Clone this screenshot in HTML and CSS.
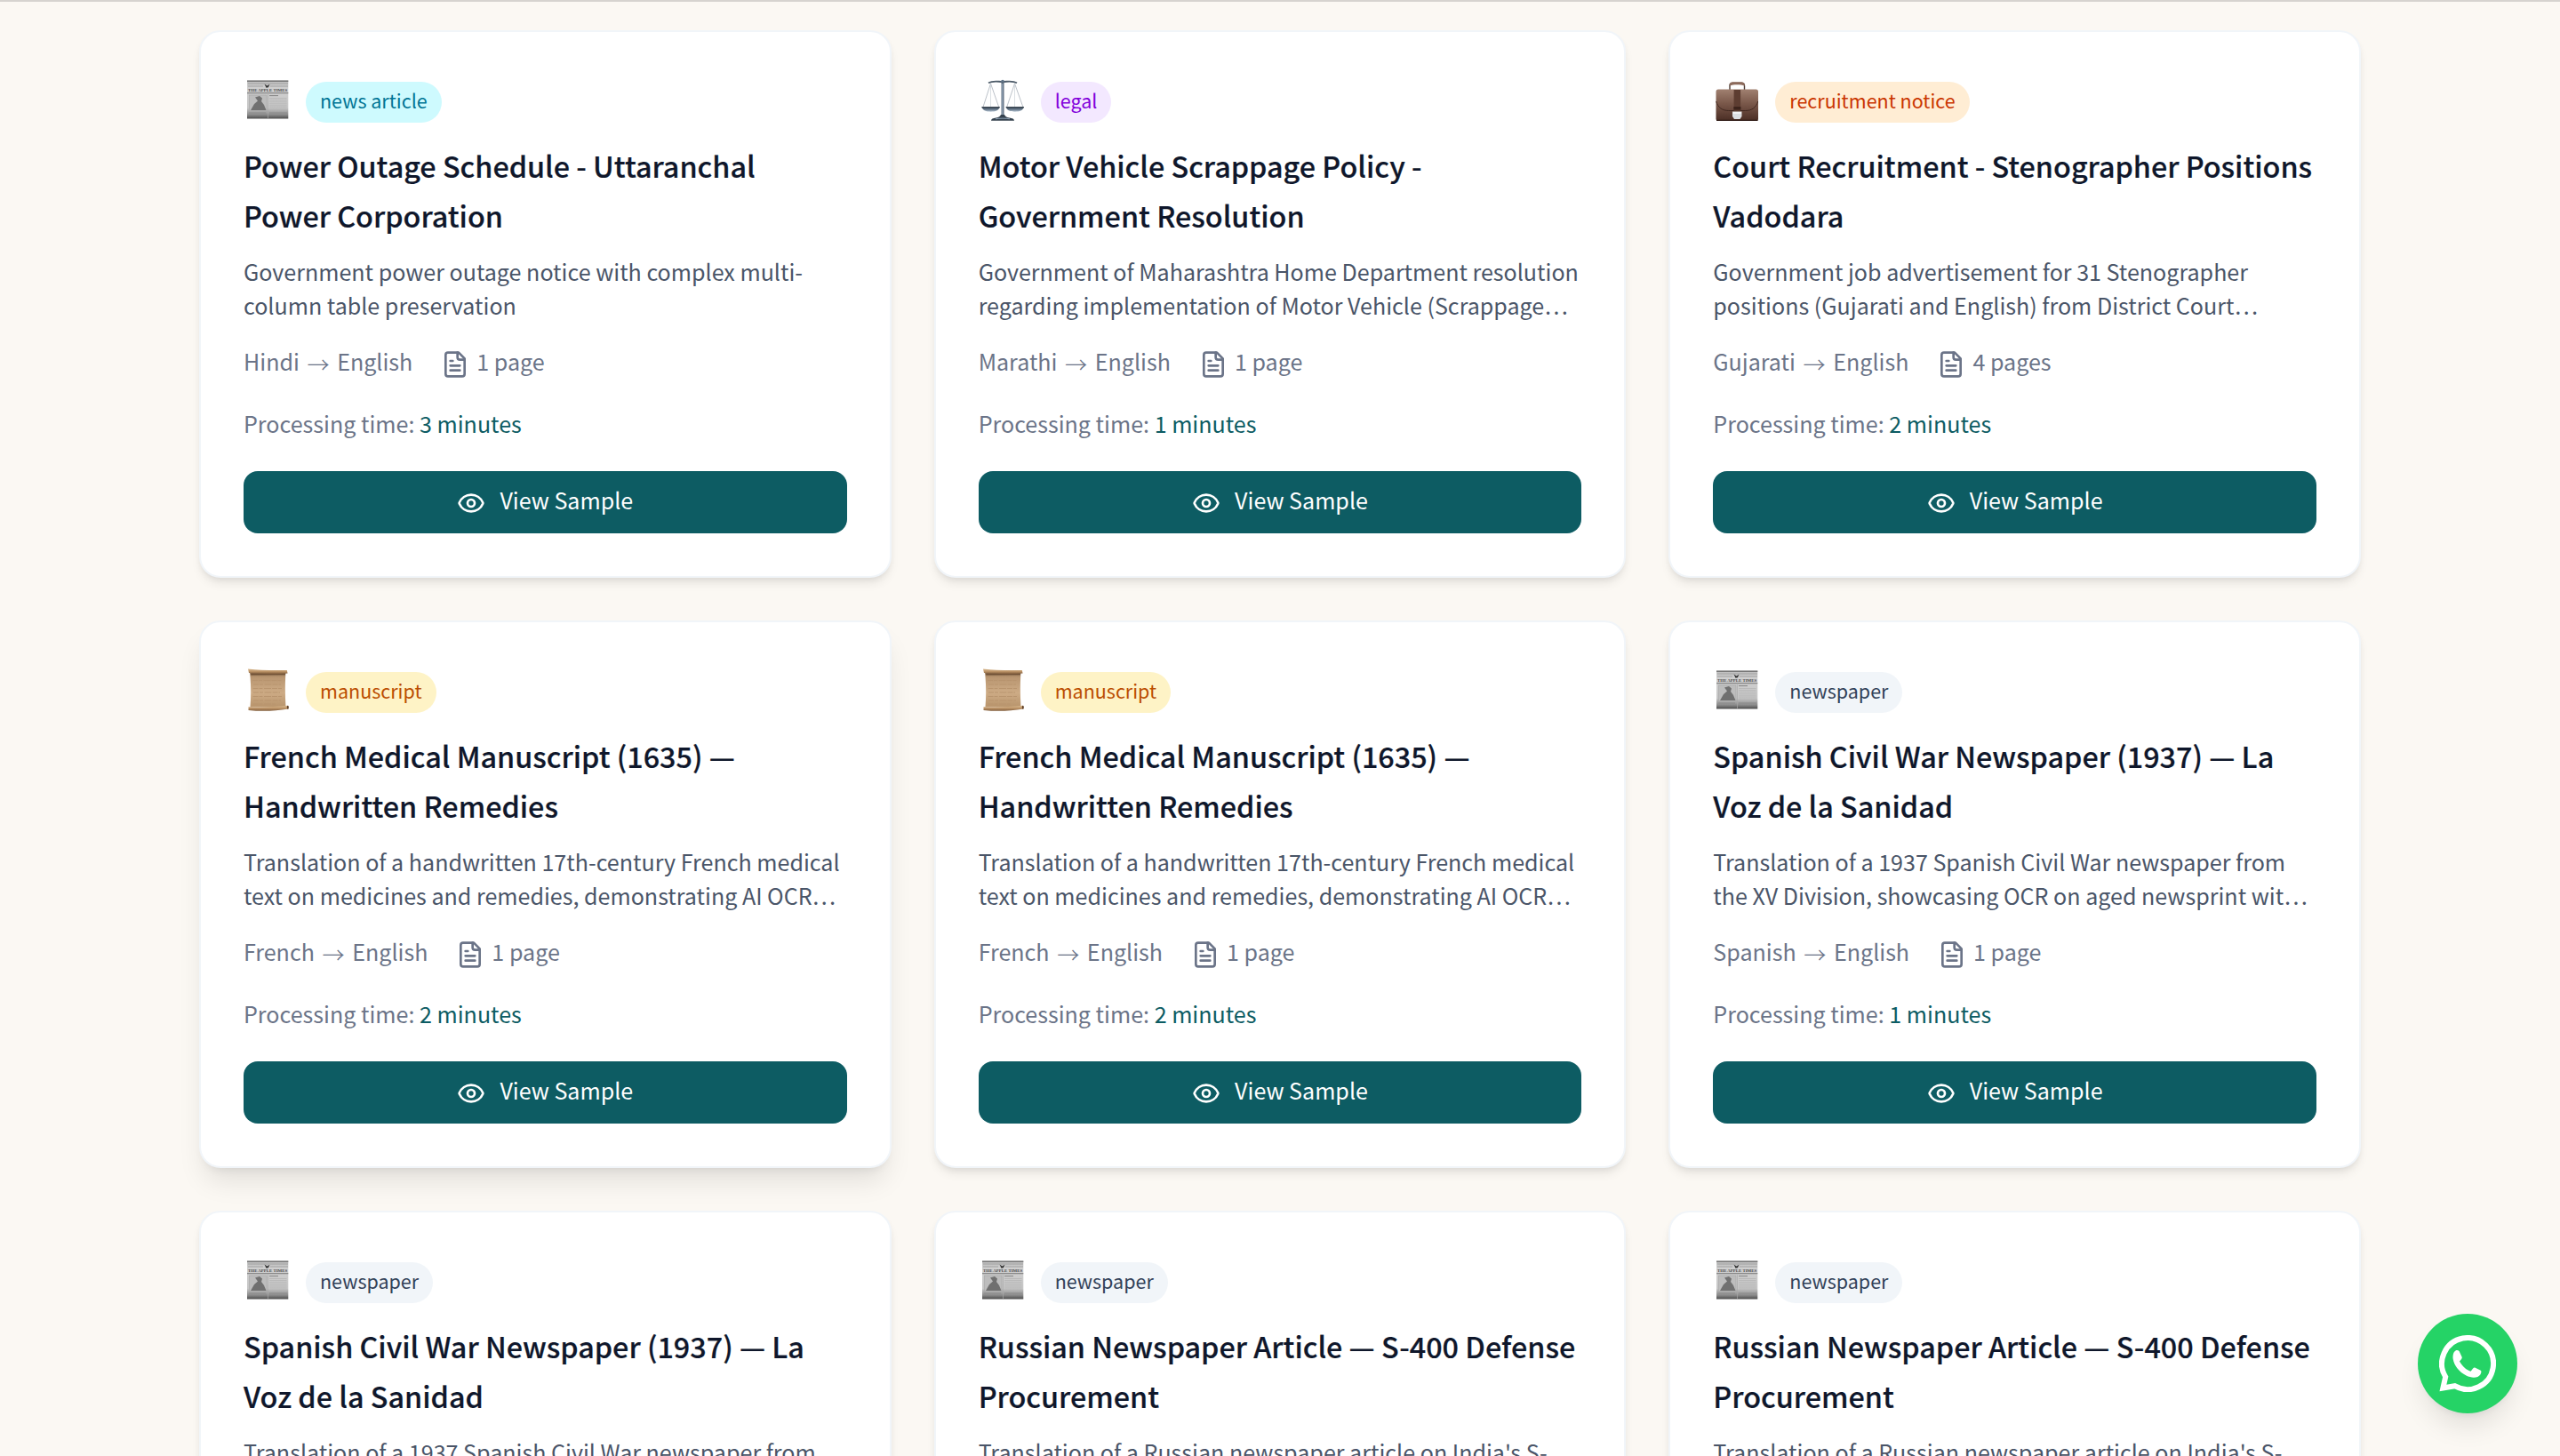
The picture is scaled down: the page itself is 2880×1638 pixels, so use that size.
FILE: index.html
```
<!DOCTYPE html>
<html lang="en">
<head>
    <meta charset="UTF-8">
    <meta name="viewport" content="width=device-width, initial-scale=1.0">
    <title>Translation Samples</title>
    <link rel="stylesheet" href="styles.css">
</head>
<body>
    <!-- shared icons -->
    <svg class="sprite" aria-hidden="true">
        <defs>
            <linearGradient id="paper" x1="0" y1="0" x2="0" y2="1">
                <stop offset="0" stop-color="#bdbdbd"/>
                <stop offset="0.2" stop-color="#d0d0d0"/>
                <stop offset="0.72" stop-color="#c6c6c6"/>
                <stop offset="0.9" stop-color="#8a8a8a"/>
                <stop offset="1" stop-color="#4a4a4a"/>
            </linearGradient>
            <linearGradient id="leather" x1="0" y1="0" x2="0" y2="1">
                <stop offset="0" stop-color="#a08070"/>
                <stop offset="0.45" stop-color="#7a584a"/>
                <stop offset="1" stop-color="#4a2d24"/>
            </linearGradient>
            <linearGradient id="parchment" x1="0" y1="0" x2="0" y2="1">
                <stop offset="0" stop-color="#8a6a4c"/>
                <stop offset="0.15" stop-color="#b99671"/>
                <stop offset="0.6" stop-color="#cdab85"/>
                <stop offset="1" stop-color="#b8946c"/>
            </linearGradient>
            <linearGradient id="roll" x1="0" y1="0" x2="0" y2="1">
                <stop offset="0" stop-color="#d9b98f"/>
                <stop offset="0.5" stop-color="#bd9467"/>
                <stop offset="1" stop-color="#7d5a3a"/>
            </linearGradient>
            <linearGradient id="pan" x1="0" y1="0" x2="0" y2="1">
                <stop offset="0" stop-color="#3f4a57"/>
                <stop offset="0.45" stop-color="#5f7183"/>
                <stop offset="1" stop-color="#b9c8d6"/>
            </linearGradient>
        </defs>

        <symbol id="icon-news" viewBox="0 0 54 50">
            <rect x="4" y="3.5" width="46.3" height="43" fill="url(#paper)"/>
            <path d="M4 4.2h46.3" stroke="#777" stroke-width="1.4"/>
            <path d="M5 7h45M5 10h17M30 10h20" stroke="#a0a0a0" stroke-width="1"/>
            <path d="M23.5 7.5l3 2 3-1.8-1.6 3.6-2.4.4z" fill="#333"/>
            <text x="27.1" y="15.6" textLength="44" lengthAdjust="spacingAndGlyphs" class="masthead">THE APPLE TIMES</text>
            <path d="M4 17.6h46.3" stroke="#888" stroke-width="1.2"/>
            <rect x="6.5" y="20" width="19.5" height="17.5" fill="#bdbdbd" stroke="#a5a5a5" stroke-width=".6"/>
            <path d="M8 37l4-7 4-3.500-3-4 5-1.500 3 2.500-1 3.500 3 4 2.500 6z" fill="#707070"/>
            <path d="M29 20.6h10" stroke="#858585" stroke-width="1"/>
            <path d="M29 23.5h19.5M29 25.6h19.5M29 27.7h19.5M29 29.8h19.5M29 31.9h19.5M29 34h19.5M29 36.1h19.5" stroke="#b4b4b4" stroke-width=".8"/>
            <path d="M27.5 19v27" stroke="#a8a8a8" stroke-width=".7"/>
            <path d="M6 40h19M29 40h20M6 42.5h19M29 42.5h20" stroke="#848484" stroke-width=".7"/>
        </symbol>

        <symbol id="icon-legal" viewBox="0 0 54 50">
            <path d="M13.5 7L4.8 34M13.5 7l9.4 27M40.5 7l-9 27M40.5 7l9.6 27" fill="none" stroke="#a9b1ba" stroke-width=".8"/>
            <path d="M13.5 7v26M40.5 7v26" stroke="#ccd2d8" stroke-width=".7"/>
            <path d="M11 6.2c5-2.8 10-1.4 16-1.2 6-.2 11-1.6 16 1.2" fill="none" stroke="#4d5b69" stroke-width="1.8"/>
            <circle cx="27" cy="4.8" r="2" fill="#5e7286"/>
            <path d="M27 5v39" stroke="#596979" stroke-width="3"/>
            <path d="M26.8 7v35" stroke="#9db0c4" stroke-width="1"/>
            <path d="M3.5 33.5h20.2c-1 3.6-4.8 5.2-10.1 5.2s-9-1.6-10.1-5.2z" fill="url(#pan)"/>
            <path d="M30.7 33.5h20.2c-1 3.6-4.8 5.2-10.1 5.2s-9-1.6-10.1-5.2z" fill="url(#pan)"/>
            <path d="M3.5 33.6h20.2M30.7 33.6h20.2" stroke="#3b4652" stroke-width="1.1"/>
            <path d="M14 48.8c0-2 2-2.8 5.5-3.2 3.5-.5 4.5-1.6 5.5-3.600h4c1 2 2 3.100 5.500 3.600 3.500.4 5.500 1.200 5.500 3.200z" fill="#34414e"/>
            <path d="M19 46.8c5-.9 11-.9 16 0" fill="none" stroke="#8fa3b6" stroke-width="1"/>
        </symbol>

        <symbol id="icon-job" viewBox="0 0 54 50">
            <path d="M19 14V9.5c0-2 1-3 3-3h10.500c2 0 3 1 3 3V14" fill="none" stroke="#4a3a34" stroke-width="1.4"/>
            <path d="M18.500 9.500c0-3 1.500-4.300 4-4.300H32c2.500 0 4 1.300 4 4.300-5-1.700-12.500-1.700-17.500 0z" fill="#8c6a5b"/>
            <rect x="3.5" y="13.5" width="47.5" height="35.5" rx="2.5" fill="url(#leather)"/>
            <path d="M3.7 27c2 7 7 10.500 14 10.500h19c7 0 12-3.500 14-10.500" fill="none" stroke="#412820" stroke-width="1"/>
            <rect x="23.6" y="14" width="7.5" height="24.5" fill="#5d3d31"/>
            <rect x="23.4" y="33" width="8" height="3.5" fill="#3c241c"/>
            <path d="M22 38.500h10.500v5.500l-2 3h-6.500l-2-3z" fill="#dcdfe2"/>
            <path d="M22.500 40h9.500" stroke="#fff" stroke-width="1.2"/>
            <path d="M4 48.3h46.500" stroke="#2e1a14" stroke-width="1.2"/>
        </symbol>

        <symbol id="icon-scroll" viewBox="0 0 54 50">
            <path d="M7 5h40.500c-1 13-.8 26 0 39.500H7.500C8.600 31 8.400 18 7 5z" fill="url(#parchment)"/>
            <path d="M8.200 7.500l38.800-.3" stroke="#6f5136" stroke-width="2"/>
            <path d="M10 14.5h33M11 19h31M10.5 23.5h33M11 28h30M10.5 32.5h33M11 37h31M10.5 41h25" stroke="#b8946e" stroke-width="1" stroke-dasharray="6 1 4 1.5 8 1"/>
            <path d="M5 1.500c13 1.700 28 1.700 43.800 1.500l.8 3.500c-15 1.600-29 .3-43.600-.5z" fill="url(#roll)"/>
            <path d="M5.500 44.200c14 .6 28 .2 44.500-1.400l.5 3.600c-15 2.600-30 3.100-45 1.600z" fill="url(#roll)"/>
            <ellipse cx="49.8" cy="44.7" rx="1" ry="2" fill="#5b3d26"/>
        </symbol>

        <symbol id="icon-file" viewBox="0 0 24 24" fill="none" stroke="currentColor" stroke-width="2" stroke-linecap="round" stroke-linejoin="round">
            <path d="M15 2H6a2 2 0 0 0-2 2v16a2 2 0 0 0 2 2h12a2 2 0 0 0 2-2V7Z"/>
            <path d="M14 2v4a2 2 0 0 0 2 2h4"/>
            <path d="M10 9H8M16 13H8M16 17H8"/>
        </symbol>

        <symbol id="icon-eye" viewBox="0 0 24 24" fill="none" stroke="currentColor" stroke-width="2" stroke-linecap="round" stroke-linejoin="round">
            <path d="M2.062 12.348a1 1 0 0 1 0-.696 10.75 10.75 0 0 1 19.876 0 1 1 0 0 1 0 .696 10.75 10.75 0 0 1-19.876 0"/>
            <circle cx="12" cy="12" r="3"/>
        </symbol>
    </svg>

    <main class="samples">
        <div class="grid">
            <article class="card">
                <div class="card-head">
                    <svg class="emoji"><use href="#icon-news"/></svg>
                    <span class="badge news">news article</span>
                </div>
                <h3>Power Outage Schedule - Uttaranchal Power Corporation</h3>
                <p class="desc">Government power outage notice with complex multi-<br>column table preservation</p>
                <div class="meta">
                    <span>Hindi <i>→</i> English</span>
                    <span class="pages"><svg><use href="#icon-file"/></svg>1 page</span>
                </div>
                <p class="time">Processing time: <span>3 minutes</span></p>
                <a class="btn" href="#"><svg><use href="#icon-eye"/></svg><span>View Sample</span></a>
            </article>

            <article class="card">
                <div class="card-head">
                    <svg class="emoji"><use href="#icon-legal"/></svg>
                    <span class="badge legal">legal</span>
                </div>
                <h3>Motor Vehicle Scrappage Policy - Government Resolution</h3>
                <p class="desc">Government of Maharashtra Home Department resolution<br>regarding implementation of Motor Vehicle (Scrappage…</p>
                <div class="meta">
                    <span>Marathi <i>→</i> English</span>
                    <span class="pages"><svg><use href="#icon-file"/></svg>1 page</span>
                </div>
                <p class="time">Processing time: <span>1 minutes</span></p>
                <a class="btn" href="#"><svg><use href="#icon-eye"/></svg><span>View Sample</span></a>
            </article>

            <article class="card">
                <div class="card-head">
                    <svg class="emoji"><use href="#icon-job"/></svg>
                    <span class="badge recruitment">recruitment notice</span>
                </div>
                <h3>Court Recruitment - Stenographer Positions Vadodara</h3>
                <p class="desc">Government job advertisement for 31 Stenographer<br>positions (Gujarati and English) from District Court…</p>
                <div class="meta">
                    <span>Gujarati <i>→</i> English</span>
                    <span class="pages"><svg><use href="#icon-file"/></svg>4 pages</span>
                </div>
                <p class="time">Processing time: <span>2 minutes</span></p>
                <a class="btn" href="#"><svg><use href="#icon-eye"/></svg><span>View Sample</span></a>
            </article>

            <article class="card active">
                <div class="card-head">
                    <svg class="emoji"><use href="#icon-scroll"/></svg>
                    <span class="badge manuscript">manuscript</span>
                </div>
                <h3>French Medical Manuscript (1635) —<br>Handwritten Remedies</h3>
                <p class="desc">Translation of a handwritten 17th-century French medical<br>text on medicines and remedies, demonstrating AI OCR…</p>
                <div class="meta">
                    <span>French <i>→</i> English</span>
                    <span class="pages"><svg><use href="#icon-file"/></svg>1 page</span>
                </div>
                <p class="time">Processing time: <span>2 minutes</span></p>
                <a class="btn" href="#"><svg><use href="#icon-eye"/></svg><span>View Sample</span></a>
            </article>

            <article class="card">
                <div class="card-head">
                    <svg class="emoji"><use href="#icon-scroll"/></svg>
                    <span class="badge manuscript">manuscript</span>
                </div>
                <h3>French Medical Manuscript (1635) —<br>Handwritten Remedies</h3>
                <p class="desc">Translation of a handwritten 17th-century French medical<br>text on medicines and remedies, demonstrating AI OCR…</p>
                <div class="meta">
                    <span>French <i>→</i> English</span>
                    <span class="pages"><svg><use href="#icon-file"/></svg>1 page</span>
                </div>
                <p class="time">Processing time: <span>2 minutes</span></p>
                <a class="btn" href="#"><svg><use href="#icon-eye"/></svg><span>View Sample</span></a>
            </article>

            <article class="card">
                <div class="card-head">
                    <svg class="emoji"><use href="#icon-news"/></svg>
                    <span class="badge">newspaper</span>
                </div>
                <h3>Spanish Civil War Newspaper (1937) — La<br>Voz de la Sanidad</h3>
                <p class="desc">Translation of a 1937 Spanish Civil War newspaper from<br>the XV Division, showcasing OCR on aged newsprint wit…</p>
                <div class="meta">
                    <span>Spanish <i>→</i> English</span>
                    <span class="pages"><svg><use href="#icon-file"/></svg>1 page</span>
                </div>
                <p class="time">Processing time: <span>1 minutes</span></p>
                <a class="btn" href="#"><svg><use href="#icon-eye"/></svg><span>View Sample</span></a>
            </article>

            <article class="card">
                <div class="card-head">
                    <svg class="emoji"><use href="#icon-news"/></svg>
                    <span class="badge">newspaper</span>
                </div>
                <h3>Spanish Civil War Newspaper (1937) — La<br>Voz de la Sanidad</h3>
                <p class="desc">Translation of a 1937 Spanish Civil War newspaper from</p>
            </article>

            <article class="card">
                <div class="card-head">
                    <svg class="emoji"><use href="#icon-news"/></svg>
                    <span class="badge">newspaper</span>
                </div>
                <h3>Russian Newspaper Article — S-400 Defense<br>Procurement</h3>
                <p class="desc">Translation of a Russian newspaper article on India's S-</p>
            </article>

            <article class="card">
                <div class="card-head">
                    <svg class="emoji"><use href="#icon-news"/></svg>
                    <span class="badge">newspaper</span>
                </div>
                <h3>Russian Newspaper Article — S-400 Defense<br>Procurement</h3>
                <p class="desc">Translation of a Russian newspaper article on India's S-</p>
            </article>
        </div>
    </main>

    <a class="whatsapp" href="#" aria-label="WhatsApp">
        <svg viewBox="0 0 64 64">
            <path d="M4.4 59.5L7.2 47A29 29 0 1 1 17.6 57.2z" fill="none" stroke="#fff" stroke-width="6"/>
            <path d="M18.500 17.500c1.500-.8 3-.6 4.200.8l3 6.500c.3 1-.2 2-2.700 4.700 3 5.500 7.500 9.500 12.500 11.300 2-2.500 3.200-4.600 4.700-4.300l6.600 3.200c1 .8.700 2.500-.3 4.500-3 4.500-10 4.300-16 1.300-8-4-13.500-11-14.800-18.500-.5-4 .300-8 2.800-9.500z" fill="#fff"/>
        </svg>
    </a>
</body>
</html>
```
FILE: styles.css
```
* {
    box-sizing: border-box;
    margin: 0;
    padding: 0;
}
body {
    font-family: "Noto Sans CJK KR", "Noto Sans CJK SC", sans-serif;
    background: #fbf8f3;
    color: #0f172b;
}
.sprite {
    position: absolute;
    width: 0;
    height: 0;
}
.masthead {
    font: bold 5px "Liberation Serif", serif;
    text-anchor: middle;
    fill: #4a4a4a;
}
.samples {
    height: 1638px;
    overflow: hidden;
    border-top: 2px solid #d6d3cf;
    padding: 32px 224px 0;
}
.grid {
    display: grid;
    grid-template-columns: repeat(3, 1fr);
    grid-auto-rows: 616px;
    gap: 48px;
}
.card {
    background: #fff;
    border: 2px solid #f1f5f9;
    border-radius: 24px;
    padding: 48px;
    box-shadow: 0 8px 12px -2px rgba(0, 0, 0, 0.08), 0 4px 8px -4px rgba(0, 0, 0, 0.1);
}
.card.active {
    box-shadow: 0 20px 30px -6px rgba(0, 0, 0, 0.1), 0 8px 12px -8px rgba(0, 0, 0, 0.1);
}
.card-head {
    display: flex;
    align-items: flex-start;
    gap: 16px;
    height: 54px;
    padding-top: 3px;
}
.emoji {
    width: 54px;
    height: 50px;
}
.badge {
    margin-top: 5px;
    padding: 3px 16px 7px;
    border-radius: 23px;
    font-size: 21.5px;
    line-height: 36px;
    background: #f1f5f9;
    color: #314158;
}
.badge.news {
    background: #cefafe;
    color: #007595;
}
.badge.legal {
    background: #f3e8ff;
    color: #8200db;
}
.badge.recruitment {
    background: #ffedd4;
    color: #ca3500;
}
.badge.manuscript {
    background: #fef3c6;
    color: #bb4d00;
}
h3 {
    margin-top: 20px;
    font-size: 32.35px;
    font-weight: 500;
    line-height: 56px;
    -webkit-text-stroke: 0.2px #0f172b;
}
.desc {
    margin-top: 16px;
    font-size: 25.07px;
    line-height: 38px;
    color: #4a5568;
    white-space: nowrap;
}
.meta {
    display: flex;
    gap: 32px;
    height: 40px;
    margin-top: 24px;
    font-size: 25.07px;
    line-height: 40px;
    color: #6b7488;
}
.meta i {
    margin: 0 3px;
    font-style: normal;
    font-weight: 300;
    line-height: 0;
    vertical-align: -3px;
}
.pages {
    display: flex;
    gap: 8px;
}
.pages svg {
    width: 32px;
    height: 32px;
    margin-top: 8px;
}
.time {
    margin-top: 30px;
    font-size: 25.07px;
    line-height: 40px;
    color: #6b7488;
}
.time span {
    color: #0d5c63;
}
.btn {
    display: flex;
    align-items: center;
    justify-content: center;
    gap: 16px;
    height: 70px;
    margin-top: 34px;
    border-radius: 16px;
    background: #0d5c63;
    color: #fff;
    font-size: 25.07px;
    text-decoration: none;
}
.btn svg {
    width: 32px;
    height: 32px;
    margin-top: 2px;
}
.btn span {
    padding-bottom: 7px;
}
.whatsapp {
    position: fixed;
    right: 48px;
    bottom: 48px;
    display: flex;
    align-items: center;
    justify-content: center;
    width: 112px;
    height: 112px;
    border-radius: 50%;
    background: #25d366;
    box-shadow: 0 20px 30px -6px rgba(0, 0, 0, 0.1), 0 8px 12px -8px rgba(0, 0, 0, 0.1);
}
.whatsapp svg {
    width: 64px;
    height: 64px;
}
```
